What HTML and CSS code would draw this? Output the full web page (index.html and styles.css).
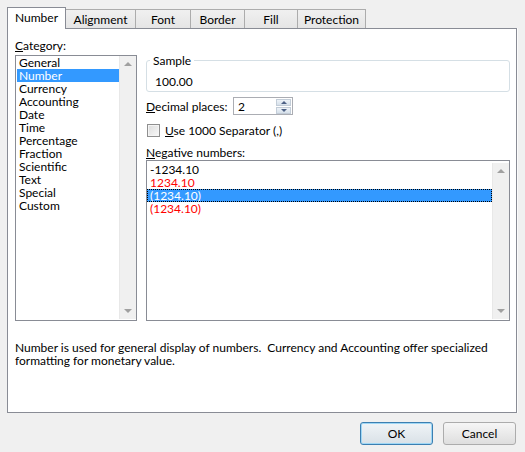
FILE: index.html
```html
<!DOCTYPE html>
<html>
<head>
<meta charset="utf-8">
<link rel="stylesheet" href="styles.css">
</head>
<body>
<div class="dialog">
  <div class="tabs">
    <div class="tab active">Number</div>
    <div class="tab w69">Alignment</div>
    <div class="tab w55">Font</div>
    <div class="tab w54">Border</div>
    <div class="tab w53">Fill</div>
    <div class="tab w69 last">Protection</div>
  </div>
  <div class="panel">
    <div class="cols">
      <div class="leftcol">
        <div class="label"><u>C</u>ategory:</div>
        <div class="listbox cat">
          <div class="items">
            <div class="item">General</div>
            <div class="item sel">Number</div>
            <div class="item">Currency</div>
            <div class="item">Accounting</div>
            <div class="item">Date</div>
            <div class="item">Time</div>
            <div class="item">Percentage</div>
            <div class="item">Fraction</div>
            <div class="item">Scientific</div>
            <div class="item">Text</div>
            <div class="item">Special</div>
            <div class="item">Custom</div>
          </div>
          <div class="scrollbar">
            <span class="arrow up"></span>
            <span class="arrow down"></span>
          </div>
        </div>
      </div>
      <div class="rightcol">
        <div class="sample">
          <span class="legend">Sample</span>
          <div class="sample-val">100.00</div>
        </div>
        <div class="decrow">
          <span class="declabel"><u>D</u>ecimal places:</span>
          <div class="spinner">
            <span class="spinval">2</span>
            <div class="spinbtns">
              <span class="spinbtn"><span class="tri up"></span></span>
              <span class="spinbtn"><span class="tri down"></span></span>
            </div>
          </div>
        </div>
        <div class="checkrow">
          <span class="checkbox"></span>
          <span><u>U</u>se 1000 Separator (,)</span>
        </div>
        <div class="label neglabel"><u>N</u>egative numbers:</div>
        <div class="listbox neg">
          <div class="items negitems">
            <div class="nitem">-1234.10</div>
            <div class="nitem red">1234.10</div>
            <div class="nitem nsel">(1234.10)</div>
            <div class="nitem red">(1234.10)</div>
          </div>
          <div class="scrollbar">
            <span class="arrow up"></span>
            <span class="arrow down"></span>
          </div>
        </div>
      </div>
    </div>
    <div class="desc">Number is used for general display of numbers.&nbsp; Currency and Accounting offer specialized<br>formatting for monetary value.</div>
  </div>
  <div class="footer">
    <button class="btn default">OK</button>
    <button class="btn">Cancel</button>
  </div>
</div>
</body>
</html>
```
FILE: styles.css
```css
html, body {
  margin: 0;
  padding: 0;
  background: #f0f0f0;
}
body {
  font-family: Lato, "Noto Sans", sans-serif;
  font-size: 12px;
  line-height: 13px;
  color: #000;
  width: 525px;
  height: 452px;
  overflow: hidden;
}
u { text-decoration: underline; text-underline-offset: 1px; }
.dialog {
  padding: 7px 8px 0 7px;
}
.tabs {
  display: flex;
  align-items: flex-end;
  height: 21px;
  position: relative;
  z-index: 2;
}
.tab {
  box-sizing: border-box;
  height: 19px;
  border: 1px solid #acacac;
  border-bottom: none;
  border-right: none;
  background: linear-gradient(#f0f0f0, #e5e5e5);
  display: flex;
  align-items: center;
  justify-content: center;
  padding-top: 1px;
  white-space: nowrap;
}
.tab.last { border-right: 1px solid #acacac; }
.tab.active {
  width: 59px;
  height: 22px;
  margin-bottom: -1px;
  background: #fff;
  border: 1px solid #898c95;
  border-bottom: none;
  padding-top: 0;
  padding-bottom: 2px;
}
.tab.active + .tab { border-left: none; }
.w69 { width: 69px; }
.w55 { width: 55px; }
.w54 { width: 54px; }
.w53 { width: 53px; }
.panel {
  box-sizing: border-box;
  width: 510px;
  height: 385px;
  background: #fff;
  border: 1px solid #898c95;
  box-shadow: 1px 0 0 #fbfbfb;
  padding: 10px 0 0 7px;
}
.cols {
  display: grid;
  grid-template-columns: 122px 364px;
  column-gap: 9px;
}
.label { height: 13px; white-space: nowrap; }
.listbox {
  box-sizing: border-box;
  border: 1px solid #898c95;
  display: flex;
  background: #fff;
}
.listbox.cat {
  margin-top: 3px;
  height: 266px;
  padding: 0 0 1px 1px;
}
.items { flex: 1; }
.item {
  height: 13px;
  padding-left: 2px;
  white-space: nowrap;
}
.item.sel {
  background: #3399ff;
  color: #fff;
}
.scrollbar {
  box-sizing: border-box;
  width: 17px;
  background: #f0f0f0;
  border-left: 1px solid #e8e8e8;
  margin: 1px 1px 0 0;
  display: flex;
  flex-direction: column;
  justify-content: space-between;
  align-items: center;
  padding: 6px 0 6px;
}
.cat .scrollbar { margin: 0; }
.arrow {
  width: 0;
  height: 0;
  border-left: 4px solid transparent;
  border-right: 4px solid transparent;
}
.arrow.up { border-bottom: 4px solid #a0a0a0; }
.arrow.down { border-top: 4px solid #a0a0a0; }
.rightcol {
  padding-top: 21px;
}
.sample {
  box-sizing: border-box;
  position: relative;
  height: 32px;
  border: 1px solid #d5dfe5;
  border-radius: 3px;
  padding: 14px 0 0 8px;
}
.legend {
  position: absolute;
  top: -7px;
  left: 3px;
  background: #fff;
  padding: 0 3px;
  line-height: 13px;
}
.decrow {
  display: flex;
  align-items: center;
  margin-top: 5px;
}
.declabel { width: 87px; white-space: nowrap; }
.spinner {
  box-sizing: border-box;
  width: 60px;
  height: 18px;
  border: 1px solid #abadb3;
  display: flex;
  align-items: center;
  justify-content: space-between;
  padding: 0 1px 0 4px;
}
.spinbtns {
  display: flex;
  flex-direction: column;
}
.spinbtn {
  box-sizing: border-box;
  width: 15px;
  height: 7px;
  background: linear-gradient(#eef3f8, #d6e0ea);
  border: 1px solid #c3cdd8;
  display: flex;
  align-items: center;
  justify-content: center;
}
.spinbtn + .spinbtn { margin-top: 1px; }
.tri {
  width: 0;
  height: 0;
  border-left: 3px solid transparent;
  border-right: 3px solid transparent;
}
.tri.up { border-bottom: 3px solid #4d6185; }
.tri.down { border-top: 3px solid #4d6185; }
.checkrow {
  display: flex;
  align-items: center;
  margin-top: 9px;
  padding-left: 1px;
  height: 13px;
  white-space: nowrap;
}
.checkbox {
  box-sizing: border-box;
  width: 13px;
  height: 13px;
  border: 1px solid #8f8f8f;
  background: linear-gradient(135deg, #dcdcdc, #f8f8f8);
  box-shadow: inset 0 0 0 1px #f4f4f4;
  margin-right: 5px;
}
.neglabel { margin-top: 9px; }
.listbox.neg {
  margin-top: 1px;
  height: 161px;
}
.negitems { padding-top: 2px; }
.nitem {
  box-sizing: border-box;
  height: 13px;
  padding-left: 3px;
  white-space: nowrap;
}
.nitem.red { color: #ff0000; }
.nitem.nsel {
  background: #3399ff;
  color: #fff;
  outline: 1px dotted #000;
  outline-offset: -1px;
}
.neg .scrollbar {
  margin: 2px 0 1px 0;
}
.desc {
  margin-top: 20px;
  width: 495px;
  white-space: nowrap;
}
.footer {
  display: flex;
  justify-content: flex-end;
  gap: 10px;
  padding-top: 9px;
  padding-right: 1px;
}
.btn {
  box-sizing: border-box;
  width: 73px;
  height: 23px;
  font-family: inherit;
  font-size: 12px;
  color: #000;
  border: 1px solid #acacac;
  border-radius: 3px;
  background: linear-gradient(#f6f6f6, #dedede);
  padding: 0;
}
.btn.default {
  border-color: #3c7fb1;
  box-shadow: inset 0 0 0 1px #9fd7f5;
  background: linear-gradient(#f0f4f7, #d9e1e7);
}
```
